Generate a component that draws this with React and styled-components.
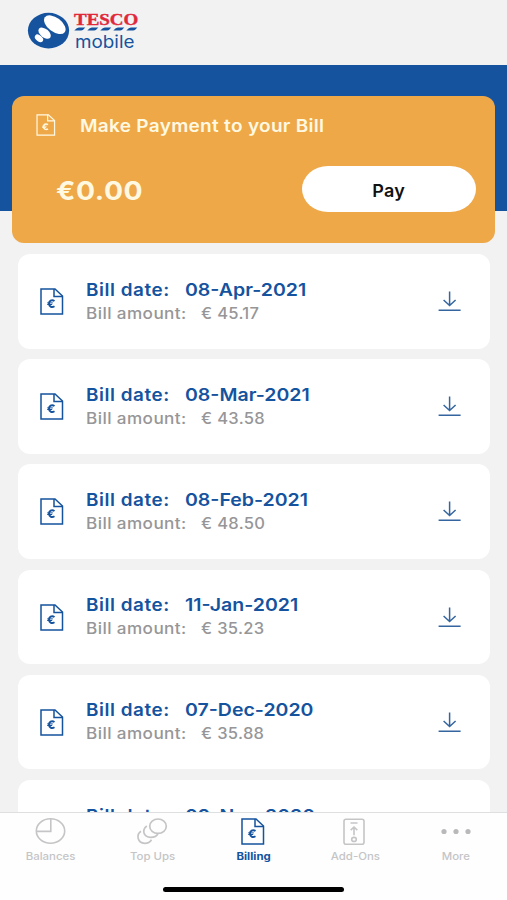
import React from "react";
import styled, { createGlobalStyle } from "styled-components";

const BLUE = "#15539e";
const GREY = "#c5c5c7";

const GlobalStyle = createGlobalStyle`
  *, *::before, *::after { box-sizing: border-box; }
  body { margin: 0; background: #f2f2f2; }
  button { font: inherit; color: inherit; border: 0; background: none; padding: 0; }
`;

const Screen = styled.div`
  width: 507px;
  height: 900px;
  display: grid;
  grid-template-rows: 65px 747px 88px;
  overflow: hidden;
  background: #f2f2f3;
  font-family: Inter, "Liberation Sans", sans-serif;
`;

const Header = styled.header`
  display: flex;
  align-items: flex-start;
  padding: 12px 0 0 27px;
`;

const Brand = styled.div`
  display: flex;
  flex-direction: column;
  margin-left: 4px;
`;

/* Horizontally stretched run of text, to give the wide geometric look. */
const Wide = styled.span`
  display: inline-block;
  white-space: nowrap;
  letter-spacing: ${(p) => p.$spacing || 0}px;
  transform: scaleX(${(p) => p.$stretch || 1});
  transform-origin: ${(p) => p.$origin || "left"} center;
`;

const BrandName = styled.div`
  height: 14px;
  font: 700 16.5px/15px "Liberation Serif", serif;
  color: #e0283a;
  -webkit-text-stroke: 0.4px #e0283a;
`;

const BrandSub = styled.div`
  height: 19px;
  margin-top: -0.5px;
  font-size: 17.3px;
  line-height: 19px;
  color: ${BLUE};
  padding-left: 1px;
`;

const Main = styled.main`
  min-height: 0;
  overflow: hidden;
  background: linear-gradient(${BLUE} 0 146.5px, transparent 146.5px);
  padding-top: 31px;
`;

const PaymentCard = styled.section`
  height: 147px;
  margin: 0 12px;
  padding: 17px 19px 0 24px;
  border-radius: 12px;
  background: #eea848;
  color: #fff9e2;
`;

const PaymentTitle = styled.h1`
  display: flex;
  align-items: center;
  gap: 24px;
  height: 24px;
  margin: 0;
  font-size: 17.3px;
  font-weight: 600;
`;

const PaymentRow = styled.div`
  display: flex;
  align-items: center;
  justify-content: space-between;
  margin-top: 29px;
  padding-left: 20px;
`;

const Balance = styled.strong`
  font-size: 25.5px;
  line-height: 32px;
  font-weight: 700;
  padding-top: 3px;
`;

const PayButton = styled.button`
  width: 174.5px;
  height: 46px;
  border-radius: 26px / 23px;
  background: #fff;
  color: #111;
  font-size: 17.3px;
  font-weight: 600;
  padding-top: 2px;
`;

const BillList = styled.ul`
  list-style: none;
  margin: 11px 17.5px 0 18px;
  padding: 0;
  display: grid;
  gap: 10.5px;
`;

const BillCard = styled.li`
  height: 94.7px;
  display: grid;
  grid-template-columns: 46px 1fr 24px;
  align-items: start;
  padding: 0 28px 0 22px;
  border-radius: 12px;
  background: #fff;
  color: ${BLUE};
`;

const FileSlot = styled.span`
  display: flex;
  padding-top: 34px;
`;

const BillText = styled.div`
  padding-top: 23.6px;
`;

const BillDate = styled.div`
  display: grid;
  grid-template-columns: 99px 1fr;
  font-size: 17.5px;
  line-height: 24px;
  font-weight: 600;
`;

const BillAmount = styled.div`
  display: grid;
  grid-template-columns: 115px 1fr;
  font-size: 15.3px;
  line-height: 23px;
  font-weight: 500;
  color: #969698;
`;

const DownloadButton = styled.button`
  display: flex;
  margin-top: 36px;
  color: #34659f;
`;

const TabBar = styled.nav`
  display: grid;
  grid-template-columns: repeat(5, 1fr);
  grid-template-rows: 53px 1fr;
  border-top: 1.5px solid #dedfe1;
  background: #fefefe;
`;

const Tab = styled.button`
  display: flex;
  flex-direction: column;
  align-items: center;
  color: ${(p) => (p.$active ? BLUE : GREY)};
  font-size: 10.4px;
  line-height: 14px;
  font-weight: ${(p) => (p.$active ? 700 : 500)};
`;

const TabIcon = styled.span`
  height: 37px;
  display: flex;
  align-items: center;
`;

const HomeIndicator = styled.div`
  grid-column: 1 / -1;
  justify-self: center;
  width: 181px;
  height: 5.5px;
  margin-top: 20.5px;
  border-radius: 3px;
  background: #000;
`;

function LogoMark() {
  return (
    <svg width="43" height="38" viewBox="0 0 43 38">
      <ellipse cx="21.5" cy="18.6" rx="20.6" ry="17.8" fill={BLUE} />
      <g fill="#fff">
        <ellipse cx="27.8" cy="12.7" rx="12.4" ry="7" transform="rotate(37 27.8 12.7)" />
        <ellipse cx="17.6" cy="21.2" rx="7.2" ry="4.3" transform="rotate(39 17.6 21.2)" />
        <ellipse cx="12" cy="26.3" rx="4.7" ry="3" transform="rotate(38 12 26.3)" />
      </g>
    </svg>
  );
}

function BrandDashes() {
  return (
    <svg width="66" height="6" viewBox="0 0 66 6" fill={BLUE}>
      {[0, 13, 26, 39, 52].map((x) => (
        <path key={x} d={`M${x + 0.3} 4.5q2.6-3 4.6-3h6.4q-2.2 3-4.1 3z`} />
      ))}
    </svg>
  );
}

function FileEuro({ width = 24, height = 27 }) {
  return (
    <svg width={width} height={height} viewBox="0 0 24 27" fill="none" stroke="currentColor" strokeWidth="1.5">
      <path d="M1 1h14l7.5 7v18H1z" />
      <path d="M14 1v7.5h8.5" />
      <path d="M14.5 13c-2.9-1.9-5.5 0-5.5 2.6s2.5 4.4 5.5 2.6" strokeWidth="1.9" />
      <path d="M7.2 14.9h5.6M7.2 16.5h5" strokeWidth="1" />
    </svg>
  );
}

function Download() {
  return (
    <svg width="24" height="22" viewBox="0 0 24 22" fill="none" stroke="currentColor" strokeWidth="1.5">
      <path d="M11.6 1.5v14M5.6 10l6 5.5 6-5.5M0.6 20.2h22" />
    </svg>
  );
}

function Pie() {
  return (
    <svg width="31" height="27" viewBox="0 0 31 27" fill="none" stroke="currentColor" strokeWidth="1.6">
      <ellipse cx="15.5" cy="13" rx="14.2" ry="12.2" />
      <path d="M15.8 0.8v12.6H1.2" />
    </svg>
  );
}

function Coins() {
  return (
    <svg width="32" height="27" viewBox="0 0 32 27" fill="none" stroke="currentColor" strokeWidth="1.7">
      <ellipse cx="22" cy="8.2" rx="8.3" ry="7.2" />
      <path d="M10.8 8c-5 3.8-3.8 11 4 11.4 3.4 0 6-1.3 7-3.5" />
      <path d="M5 13.3c-5.2 3.6-3.5 11.7 3.7 12 3.2 0 5.5-1.4 6.8-3.6" />
    </svg>
  );
}

function AddOns() {
  return (
    <svg width="24" height="28" viewBox="0 0 24 28" fill="none" stroke="currentColor" strokeWidth="1.6">
      <rect x="1" y="1.3" width="20" height="25" rx="2" />
      <path d="M7.5 5h7M11 17.2v-8M7.7 12.1L11 9l3.3 3.1" />
      <ellipse cx="11" cy="21.4" rx="2.3" ry="2" />
    </svg>
  );
}

function Dots() {
  return (
    <svg width="32" height="8" viewBox="0 0 32 8" fill="#b9b9bb">
      <circle cx="4" cy="3.5" r="2.6" />
      <circle cx="16" cy="3.5" r="2.6" />
      <circle cx="28" cy="3.5" r="2.6" />
    </svg>
  );
}

const bills = [
  { date: "08-Apr-2021", amount: "45.17" },
  { date: "08-Mar-2021", amount: "43.58" },
  { date: "08-Feb-2021", amount: "48.50" },
  { date: "11-Jan-2021", amount: "35.23" },
  { date: "07-Dec-2020", amount: "35.88" },
  { date: "09-Nov-2020" },
];

const tabs = [
  { label: "Balances", icon: <Pie /> },
  { label: "Top Ups", icon: <Coins /> },
  { label: "Billing", icon: <FileEuro />, active: true },
  { label: "Add-Ons", icon: <AddOns /> },
  { label: "More", icon: <Dots /> },
];

export default function App() {
  return (
    <Screen>
      <GlobalStyle />
      <Header>
        <LogoMark />
        <Brand>
          <BrandName><Wide $stretch={1.15}>TESCO</Wide></BrandName>
          <BrandDashes />
          <BrandSub><Wide $stretch={1.09}>mobile</Wide></BrandSub>
        </Brand>
      </Header>
      <Main>
        <PaymentCard>
          <PaymentTitle>
            <FileEuro width={20} height={22} />
            <Wide $stretch={1.1} $spacing={0.27}>Make Payment to your Bill</Wide>
          </PaymentTitle>
          <PaymentRow>
            <Balance><Wide $stretch={1.11} $spacing={0.5}>€0.00</Wide></Balance>
            <PayButton><Wide $origin="center" $stretch={1.04} $spacing={0.2}>Pay</Wide></PayButton>
          </PaymentRow>
        </PaymentCard>
        <BillList>
          {bills.map((bill) => (
            <BillCard key={bill.date}>
              <FileSlot><FileEuro /></FileSlot>
              <BillText>
                <BillDate>
                  <Wide $stretch={1.08} $spacing={0.5}>Bill date:</Wide>
                  <Wide $stretch={1.115}>{bill.date}</Wide>
                </BillDate>
                {bill.amount && (
                  <BillAmount>
                    <Wide $stretch={1.12} $spacing={0.37}>Bill amount:</Wide>
                    <Wide $stretch={1.08} $spacing={0.3}>€ {bill.amount}</Wide>
                  </BillAmount>
                )}
              </BillText>
              <DownloadButton aria-label="Download bill"><Download /></DownloadButton>
            </BillCard>
          ))}
        </BillList>
      </Main>
      <TabBar>
        {tabs.map((tab) => (
          <Tab key={tab.label} $active={tab.active}>
            <TabIcon>{tab.icon}</TabIcon>
            <Wide $origin="center" $stretch={1.1}>{tab.label}</Wide>
          </Tab>
        ))}
        <HomeIndicator />
      </TabBar>
    </Screen>
  );
}
